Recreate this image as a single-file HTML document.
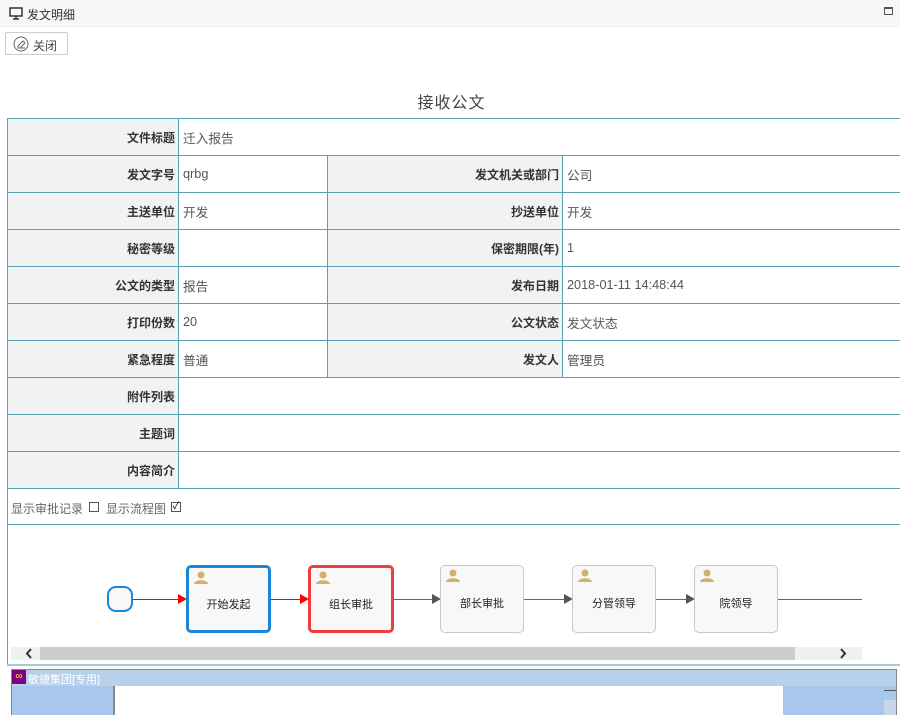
<!DOCTYPE html>
<html><head><meta charset="utf-8"><style>
*{margin:0;padding:0;box-sizing:border-box}
body{width:900px;height:715px;overflow:hidden;background:#fff;font-family:"Liberation Sans","Noto Sans CJK SC",sans-serif;font-size:12px;color:#333;position:relative}
.a{position:absolute}
table{position:absolute;left:7px;top:118px;width:900px;border-collapse:collapse}
td{border:1px solid #5b9fb4;height:37px;padding:0 4px;font-size:12.7px;color:#555}
td.l{background:#f2f2f2;text-align:right;font-weight:bold;color:#333;padding-right:3px;font-size:12px}
.box{position:absolute;top:565px;width:84px;height:68px;border:1px solid #c8c8c8;border-radius:5px;background:#f8f8f8;font-size:11px;color:#222;text-align:center;line-height:76px}
.box svg{position:absolute;left:5px;top:3px}
.ln{position:absolute;height:1px;background:#666;top:599px}
.ar{position:absolute;top:594px;width:0;height:0;border-top:5px solid transparent;border-bottom:5px solid transparent;border-left:9px solid #555}
</style></head><body>
<div class="a" style="left:0;top:0;width:900px;height:27px;background:#f7f7f7;border-bottom:1px solid #eee"></div>
<svg class="a" style="left:9px;top:7px" width="14" height="13" viewBox="0 0 14 13"><rect x="1" y="1" width="12" height="8" fill="none" stroke="#333" stroke-width="1.5"/><path d="M4 12h6M7 9v3" stroke="#333" stroke-width="1.5"/></svg>
<div class="a" style="left:27px;top:6px;font-size:12px;color:#333">发文明细</div>
<div class="a" style="left:884px;top:7px;width:9px;height:8px;border:1px solid #555;border-top-width:2px"></div>
<div class="a" style="left:5px;top:32px;width:63px;height:23px;border:1px solid #ccc;border-radius:2px;background:#fff"></div>
<svg class="a" style="left:13px;top:36px" width="16" height="16" viewBox="0 0 16 16"><circle cx="8" cy="8" r="7" fill="none" stroke="#666"/><path d="M5 10l5-5 2 2-5 5H5zM5 12h7" fill="none" stroke="#666"/></svg>
<div class="a" style="left:33px;top:37px;color:#444">关闭</div>
<div class="a" style="left:0;top:89px;width:900px;text-align:center;font-size:16px;color:#444;letter-spacing:1px;padding-left:3px">接收公文</div>
<table>
<colgroup><col style="width:171px"><col style="width:149px"><col style="width:235px"><col></colgroup>
<tr><td class="l">文件标题</td><td colspan="3">迁入报告</td></tr>
<tr><td class="l">发文字号</td><td>qrbg</td><td class="l">发文机关或部门</td><td>公司</td></tr>
<tr><td class="l">主送单位</td><td>开发</td><td class="l">抄送单位</td><td>开发</td></tr>
<tr><td class="l">秘密等级</td><td></td><td class="l">保密期限(年)</td><td>1</td></tr>
<tr><td class="l">公文的类型</td><td>报告</td><td class="l">发布日期</td><td>2018-01-11 14:48:44</td></tr>
<tr><td class="l">打印份数</td><td>20</td><td class="l">公文状态</td><td>发文状态</td></tr>
<tr><td class="l">紧急程度</td><td>普通</td><td class="l">发文人</td><td>管理员</td></tr>
<tr><td class="l">附件列表</td><td colspan="3"></td></tr>
<tr><td class="l">主题词</td><td colspan="3"></td></tr>
<tr><td class="l">内容简介</td><td colspan="3"></td></tr>
</table>
<div class="a" style="left:7px;top:489px;width:1px;height:176px;background:#5b9fb4"></div>
<div class="a" style="left:11px;top:500px;color:#666">显示审批记录</div>
<div class="a" style="left:89px;top:502px;width:10px;height:10px;border:1px solid #555"></div>
<div class="a" style="left:106px;top:500px;color:#666">显示流程图</div>
<div class="a" style="left:171px;top:502px;width:10px;height:10px;border:1px solid #555;font-size:10px;line-height:8px;text-align:center;color:#000">✓</div>
<div class="a" style="left:7px;top:524px;width:893px;height:1px;background:#5b9fb4"></div>
<div class="a" style="left:107px;top:586px;width:26px;height:26px;border:2px solid #1a86d8;border-radius:9px;background:#f8f8f8"></div>
<div class="ln" style="left:133px;width:46px;background:#f00"></div><div class="ar" style="left:178px;border-left-color:#f00"></div>
<div class="box" style="left:186px;border:3px solid #1a86d8;line-height:74px;width:85px">开始发起<svg width="14" height="13" viewBox="0 0 14 13"><circle cx="7" cy="4" r="3.5" fill="#d4b06a"/><path d="M0 13c0-5 14-5 14 0z" fill="#d4b06a"/></svg></div>
<div class="ln" style="left:271px;width:30px;background:#f00"></div><div class="ar" style="left:300px;border-left-color:#f00"></div>
<div class="box" style="left:308px;border:3px solid #f03c3c;line-height:74px;width:86px">组长审批<svg width="14" height="13" viewBox="0 0 14 13"><circle cx="7" cy="4" r="3.5" fill="#d4b06a"/><path d="M0 13c0-5 14-5 14 0z" fill="#d4b06a"/></svg></div>
<div class="ln" style="left:394px;width:40px"></div><div class="ar" style="left:432px"></div>
<div class="box" style="left:440px">部长审批<svg width="14" height="13" viewBox="0 0 14 13"><circle cx="7" cy="4" r="3.5" fill="#d4b06a"/><path d="M0 13c0-5 14-5 14 0z" fill="#d4b06a"/></svg></div>
<div class="ln" style="left:524px;width:42px"></div><div class="ar" style="left:564px"></div>
<div class="box" style="left:572px">分管领导<svg width="14" height="13" viewBox="0 0 14 13"><circle cx="7" cy="4" r="3.5" fill="#d4b06a"/><path d="M0 13c0-5 14-5 14 0z" fill="#d4b06a"/></svg></div>
<div class="ln" style="left:656px;width:32px"></div><div class="ar" style="left:686px"></div>
<div class="box" style="left:694px">院领导<svg width="14" height="13" viewBox="0 0 14 13"><circle cx="7" cy="4" r="3.5" fill="#d4b06a"/><path d="M0 13c0-5 14-5 14 0z" fill="#d4b06a"/></svg></div>
<div class="ln" style="left:778px;width:84px"></div>
<div class="a" style="left:11px;top:647px;width:851px;height:13px;background:#f0f0f0"></div>
<div class="a" style="left:40px;top:647px;width:755px;height:13px;background:#cdcdcd"></div>
<svg class="a" style="left:24px;top:648px" width="10" height="11" viewBox="0 0 10 11"><path d="M7 1L3 5.5 7 10" fill="none" stroke="#333" stroke-width="2"/></svg>
<svg class="a" style="left:838px;top:648px" width="10" height="11" viewBox="0 0 10 11"><path d="M3 1l4 4.5L3 10" fill="none" stroke="#333" stroke-width="2"/></svg>
<div class="a" style="left:7px;top:664px;width:893px;height:2px;background:#a3cdd6"></div>
<div class="a" style="left:11px;top:669px;width:886px;height:46px;background:#a9c6ec;border:1px solid #888;border-bottom:none"></div>
<div class="a" style="left:12px;top:670px;width:884px;height:16px;background:#b9d0ea"></div>
<div class="a" style="left:12px;top:670px;width:14px;height:14px;background:#800080;color:#ff0;font-size:10px;line-height:14px;text-align:center">∞</div>
<div class="a" style="left:28px;top:671px;color:#fff;font-size:11px">敏捷集团[专用]</div>
<div class="a" style="left:113px;top:686px;width:670px;height:29px;background:#fff;border-left:2px solid #888"></div>
<div class="a" style="left:884px;top:690px;width:12px;height:1px;background:#555"></div>
<div class="a" style="left:884px;top:700px;width:12px;height:15px;background:#c8d6e6"></div>
</body></html>
